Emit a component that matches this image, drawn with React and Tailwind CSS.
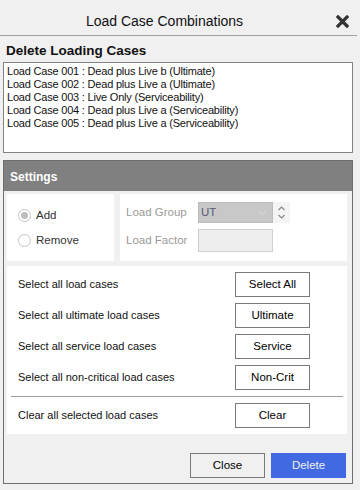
const cases = [
  'Load Case 001 : Dead plus Live b (Ultimate)',
  'Load Case 002 : Dead plus Live a (Ultimate)',
  'Load Case 003 : Live Only (Serviceability)',
  'Load Case 004 : Dead plus Live a (Serviceability)',
  'Load Case 005 : Dead plus Live a (Serviceability)',
];

const actions = [
  { label: 'Select all load cases', button: 'Select All' },
  { label: 'Select all ultimate load cases', button: 'Ultimate' },
  { label: 'Select all service load cases', button: 'Service' },
  { label: 'Select all non-critical load cases', button: 'Non-Crit' },
];

export default function App() {
  return (
    <div className="flex h-[490px] w-[360px] flex-col bg-[#f0f0f0] font-['Liberation_Sans',Arial,sans-serif] text-[#111]">
      <div className="mr-[3px] flex h-[36px] shrink-0 items-center border-b border-[#a0a0a0] pt-[7px]">
        <div className="flex-1 text-center text-[14px]">Load Case Combinations</div>
        <div className="flex w-[28px] justify-center pr-[1px]">
          <svg width="13" height="13" viewBox="0 0 13 13">
            <path d="M2 2 L11 11 M11 2 L2 11" stroke="#333" strokeWidth="3.2" strokeLinecap="square" />
          </svg>
        </div>
      </div>

      <div className="px-[6px] pt-[5px] text-[13.5px] font-bold leading-[20px]">Delete Loading Cases</div>

      <div className="ml-[3px] mr-[7px] mt-[1px] h-[91px] border border-[#828282] bg-white px-[3px] pt-[2px] text-[11px] leading-[13px] tracking-[-0.2px]">
        {cases.map((c) => (
          <div key={c}>{c}</div>
        ))}
      </div>

      <div className="ml-[3px] mr-[7px] mt-[7px] flex h-[324px] flex-col border border-[#6e6e6e]">
        <div className="flex h-[30px] items-center bg-[#808080] pl-[6px] pt-[1px] text-[12px] font-bold text-white">Settings</div>

        <div className="ml-[3px] mr-[5px] mt-[3px] flex gap-[6px]">
          <div className="flex h-[67px] w-[107px] flex-col justify-center gap-[11px] bg-white pl-[11px] text-[11.5px] leading-[14px] text-[#333]">
            <label className="flex items-center gap-[5px]">
              <span className="flex h-[13px] w-[13px] items-center justify-center rounded-full border border-[#c4c4c4]">
                <span className="h-[7px] w-[7px] rounded-full bg-[#bdbdbd]" />
              </span>
              Add
            </label>
            <label className="flex items-center gap-[5px]">
              <span className="h-[13px] w-[13px] rounded-full border border-[#c4c4c4]" />
              Remove
            </label>
          </div>

          <div className="flex h-[67px] flex-1 flex-col gap-[6px] bg-white pl-[6px] pt-[8px] text-[11.5px] text-[#9a9a9a]">
            <div className="flex items-center">
              <span className="w-[72px]">Load Group</span>
              <div className="flex h-[21px] w-[75px] items-center justify-between border border-[#bcbcbc] bg-[#c8c8c8] pl-[2px] pr-[5px] text-[11.5px] text-[#5a5a7a]">
                UT
                <svg width="9" height="6" viewBox="0 0 9 6">
                  <path d="M0.5 0.5 L4.5 4.5 L8.5 0.5" fill="none" stroke="#dcdcdc" strokeWidth="1" />
                </svg>
              </div>
              <div className="flex h-[21px] w-[17px] flex-col items-center justify-center gap-[3px] bg-[#f4f4f4]">
                <svg width="7" height="5" viewBox="0 0 7 5">
                  <path d="M0.5 4 L3.5 1 L6.5 4" fill="none" stroke="#8a8a8a" strokeWidth="1.2" />
                </svg>
                <svg width="7" height="5" viewBox="0 0 7 5">
                  <path d="M0.5 1 L3.5 4 L6.5 1" fill="none" stroke="#8a8a8a" strokeWidth="1.2" />
                </svg>
              </div>
            </div>
            <div className="flex items-center">
              <span className="w-[72px]">Load Factor</span>
              <div className="h-[23px] w-[75px] border border-[#d0d0d0] bg-[#eeeeee]" />
            </div>
          </div>
        </div>

        <div className="ml-[3px] mr-[5px] mt-[5px] flex flex-col bg-white px-[4px] pb-[6px] pt-[6px] text-[11px]">
          {actions.map((a, i) => (
            <div key={a.button} className={`flex items-center justify-between pl-[7px] pr-[33px] ${i > 0 ? 'mt-[6px]' : ''}`}>
              <span>{a.label}</span>
              <button className="h-[25px] w-[75px] border border-[#7a7a7a] bg-white text-[11.5px] text-black">{a.button}</button>
            </div>
          ))}
          <div className="my-[6px] h-px bg-[#a0a0a0]" />
          <div className="flex items-center justify-between pl-[7px] pr-[33px]">
            <span>Clear all selected load cases</span>
            <button className="h-[25px] w-[75px] border border-[#7a7a7a] bg-white text-[11.5px] text-black">Clear</button>
          </div>
        </div>

        <div className="mt-auto mb-[5px] flex justify-end gap-[6px] pr-[6px]">
          <button className="h-[25px] w-[75px] border border-[#7a7a7a] bg-[#f0f0f0] text-[11.5px] text-black">Close</button>
          <button className="h-[25px] w-[75px] bg-[#4169e1] text-[11.5px] text-[#f0f0f0]">Delete</button>
        </div>
      </div>
    </div>
  );
}
